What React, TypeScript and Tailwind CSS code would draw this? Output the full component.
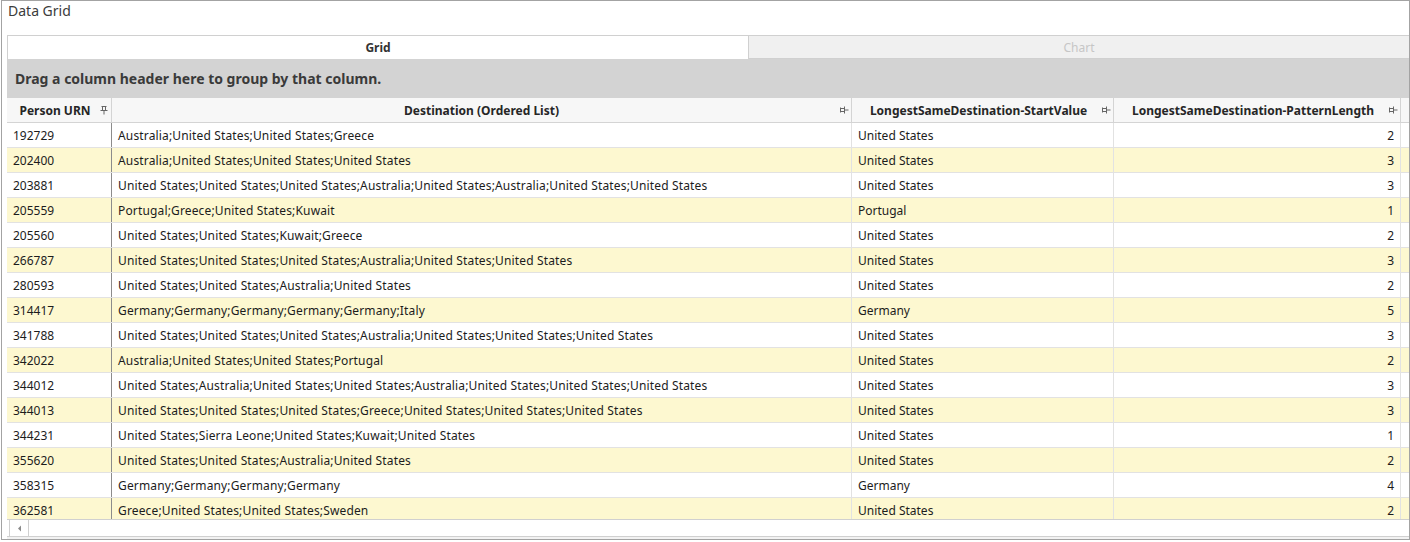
import React from 'react';

type Row = { urn: string; dest: string; start: string; len: number };

const rows: Row[] = [
  { urn: '192729', dest: 'Australia;United States;United States;Greece', start: 'United States', len: 2 },
  { urn: '202400', dest: 'Australia;United States;United States;United States', start: 'United States', len: 3 },
  { urn: '203881', dest: 'United States;United States;United States;Australia;United States;Australia;United States;United States', start: 'United States', len: 3 },
  { urn: '205559', dest: 'Portugal;Greece;United States;Kuwait', start: 'Portugal', len: 1 },
  { urn: '205560', dest: 'United States;United States;Kuwait;Greece', start: 'United States', len: 2 },
  { urn: '266787', dest: 'United States;United States;United States;Australia;United States;United States', start: 'United States', len: 3 },
  { urn: '280593', dest: 'United States;United States;Australia;United States', start: 'United States', len: 2 },
  { urn: '314417', dest: 'Germany;Germany;Germany;Germany;Germany;Italy', start: 'Germany', len: 5 },
  { urn: '341788', dest: 'United States;United States;United States;Australia;United States;United States;United States', start: 'United States', len: 3 },
  { urn: '342022', dest: 'Australia;United States;United States;Portugal', start: 'United States', len: 2 },
  { urn: '344012', dest: 'United States;Australia;United States;United States;Australia;United States;United States;United States', start: 'United States', len: 3 },
  { urn: '344013', dest: 'United States;United States;United States;Greece;United States;United States;United States', start: 'United States', len: 3 },
  { urn: '344231', dest: 'United States;Sierra Leone;United States;Kuwait;United States', start: 'United States', len: 1 },
  { urn: '355620', dest: 'United States;United States;Australia;United States', start: 'United States', len: 2 },
  { urn: '358315', dest: 'Germany;Germany;Germany;Germany', start: 'Germany', len: 4 },
  { urn: '362581', dest: 'Greece;United States;United States;Sweden', start: 'United States', len: 2 },
];

// pin glyph shown at the right of each column header
function Pin({ side }: { side?: boolean }) {
  return (
    <svg width="10" height="10" viewBox="0 0 10 10" className={side ? '-rotate-90 shrink-0' : 'shrink-0'}>
      <path d="M2.5 1.5h5M3.5 1.5v4M6.5 1.5v4M1.5 5.5h7M5 5.5v4" stroke="#666" strokeWidth="1" fill="none" />
    </svg>
  );
}

const cols = 'grid grid-cols-[105px_740px_262px_287px]';

export default function App() {
  return (
    <div className="w-[1410px] h-[542px] bg-white pl-px" style={{ fontFamily: '"Segoe UI", "Noto Sans", sans-serif' }}>
      <div className="h-[540px] border border-[#a3a3a3] flex flex-col">
        <div className="h-[34px] pl-[6px] text-[14px] leading-[20px] text-[#3c3c3c]">Data Grid</div>

        <div className="ml-[5px] flex flex-col flex-1 min-h-0">
          {/* tabs */}
          <div className="flex h-[24px] border-t border-[#d0d0d0] text-[12px] font-bold">
            <div className="w-[741px] bg-white border-l border-[#d0d0d0] flex items-center justify-center text-[#333]">Grid</div>
            <div className="flex-1 bg-[#f0f0f0] border-l border-b border-[#d0d0d0] flex items-center justify-center pt-px text-[#c6c6c6] font-normal">Chart</div>
          </div>

          {/* group panel */}
          <div className="h-[39px] bg-[#d3d3d3] flex items-center pl-[8px] text-[14px] font-bold text-[#3a3a3a]">
            Drag a column header here to group by that column.
          </div>

          <div className="bg-[#f2f2f2] flex-1 min-h-0 flex flex-col">
            {/* column headers */}
            <div className={`${cols} h-[25px] bg-[#f7f7f7] border-b border-[#d4d4d4] text-[12px] font-bold text-[#262626]`}>
              <div className="flex items-center justify-center pt-px border-r border-[#d4d4d4] relative">
                <span className="-ml-[8px]">Person URN</span>
                <span className="absolute right-[2px] top-[7px]"><Pin /></span>
              </div>
              <div className="flex items-center justify-center pt-px border-r border-[#d4d4d4] relative">
                <span>Destination (Ordered List)</span>
                <span className="absolute right-[2px] top-[7px]"><Pin side /></span>
              </div>
              <div className="flex items-center justify-center pt-px border-r border-[#d4d4d4] relative">
                <span className="-ml-[8px]">LongestSameDestination-StartValue</span>
                <span className="absolute right-[2px] top-[7px]"><Pin side /></span>
              </div>
              <div className="flex items-center justify-center pt-px border-r border-[#d4d4d4] relative">
                <span className="-ml-[8px]">LongestSameDestination-PatternLength</span>
                <span className="absolute right-[2px] top-[7px]"><Pin side /></span>
              </div>
            </div>

            {/* rows */}
            <div className="h-[396px] overflow-hidden">
              {rows.map((r, i) => (
                <div
                  key={r.urn}
                  className={`${cols} h-[25px] border-b border-[#e2e2e2] text-[12px] text-[#1c1c1c] ${i % 2 ? 'bg-[#fdf8d0]' : 'bg-white'}`}
                >
                  <div className="flex items-center pl-[6px] pt-px border-r border-[#8c8c8c]">{r.urn}</div>
                  <div className="flex items-center pl-[6px] pt-px border-r border-[#e2e2e2] whitespace-nowrap overflow-hidden tracking-[0.15px]">{r.dest}</div>
                  <div className="flex items-center pl-[6px] pt-px border-r border-[#e2e2e2]">{r.start}</div>
                  <div className="flex items-center justify-end pr-[6px] pt-px border-r border-[#e2e2e2]">{r.len}</div>
                </div>
              ))}
            </div>

            {/* horizontal scrollbar */}
            <div className="h-[18px] bg-white border-t border-b border-[#d0d0d0] flex">
              <div className="w-[20px] ml-[2px] border-l border-r border-[#d0d0d0] flex items-center justify-center">
                <svg width="5" height="7" viewBox="0 0 5 7">
                  <path d="M4 0.5 1 3.5 4 6.5Z" fill="#8a8a8a" />
                </svg>
              </div>
              <div className="flex-1" />
            </div>
          </div>
        </div>
      </div>
    </div>
  );
}
